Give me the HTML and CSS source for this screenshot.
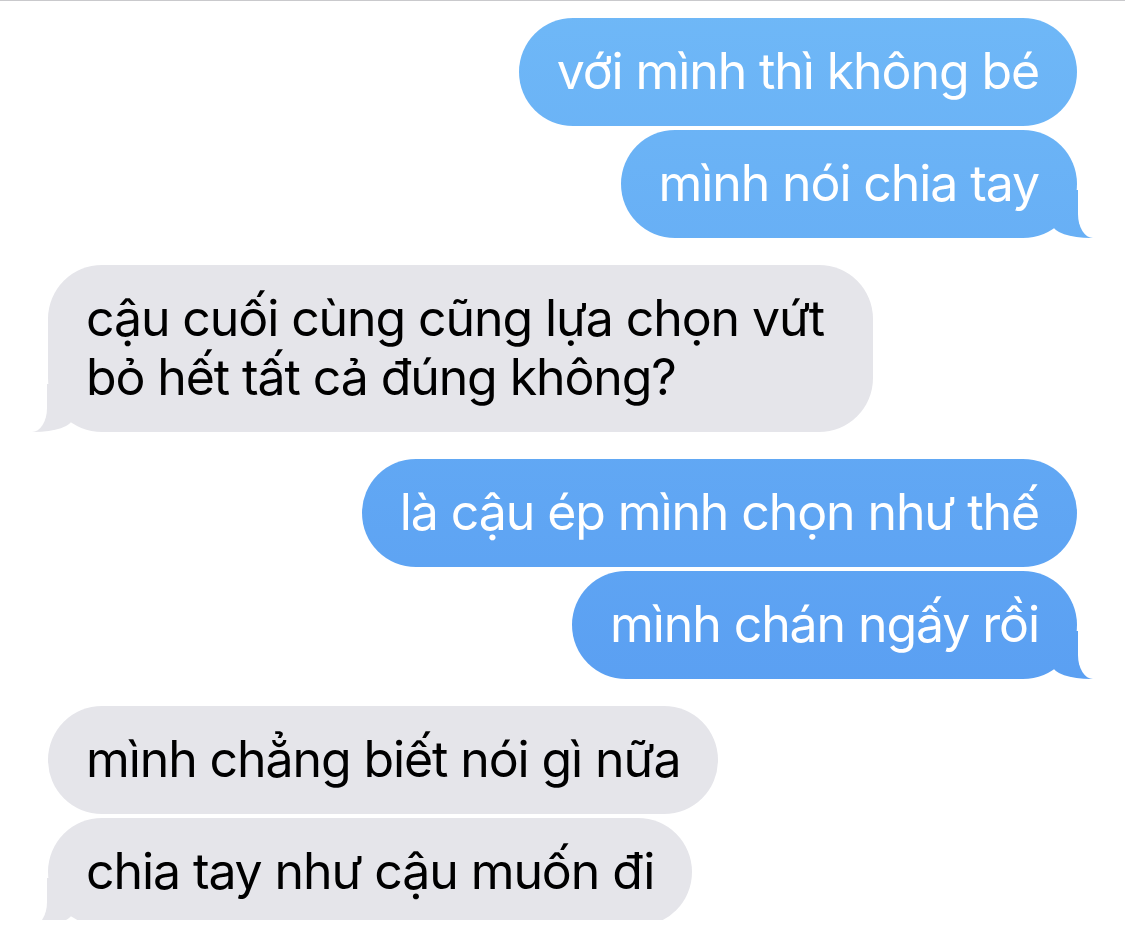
FILE: index.html
```html
<!DOCTYPE html>
<html lang="vi">
  <head>
    <meta charset="UTF-8" />
    <meta name="viewport" content="width=device-width, initial-scale=1.0" />
    <title>Tin nhắn</title>
    <link rel="stylesheet" href="styles.css">
  </head>
  <body>
    <div class="thread">
      <div class="msg sent">với mình thì không bé</div>
      <div class="msg sent tail">mình nói chia tay</div>

      <div class="msg recv tail start multi">cậu cuối cùng cũng lựa chọn vứt<br />bỏ hết tất cả đúng không?</div>

      <div class="msg sent start">là cậu ép mình chọn như thế</div>
      <div class="msg sent tail">mình chán ngấy rồi</div>

      <div class="msg recv start">mình chẳng biết nói gì nữa</div>
      <div class="msg recv tail">chia tay như cậu muốn đi</div>
    </div>
  </body>
</html>
```

FILE: styles.css
```css
body {
  margin: 0;
  background: #fff;
  font-family: Inter, "Noto Sans", "Liberation Sans", sans-serif;
}
.thread {
  height: 920px;
  box-sizing: border-box;
  border-top: 1px solid #c9c9cc;
  padding: 17px 48px 0;
  display: flex;
  flex-direction: column;
  overflow: hidden;
}
.msg {
  position: relative;
  padding: 24px 38px 25px;
  border-radius: 54px;
  font-size: 50px;
  line-height: 59px;
  letter-spacing: -1.1px;
  margin-top: 4px;
}
.msg.start {
  margin-top: 27px;
}
.msg:first-child {
  margin-top: 0;
}
.msg.multi {
  padding-right: 49px;
}
.sent {
  align-self: flex-end;
  color: #fff;
  background: linear-gradient(#6fb8f7 0px, #5a9ff2 700px, #5096f0 938px);
  background-attachment: fixed;
}
.recv {
  align-self: flex-start;
  color: #000;
  background: #e5e5ea;
}

/* bubble tails */
.tail::before,
.tail::after {
  content: "";
  position: absolute;
  bottom: 0;
}
.sent.tail::before {
  right: -16px;
  width: 40px;
  height: 48px;
  background: inherit;
  background-attachment: fixed;
  border-bottom-left-radius: 38px 13px;
}
.sent.tail::after {
  right: -31px;
  width: 30px;
  height: 52px;
  background: #fff;
  border-bottom-left-radius: 15px 24px;
}
.recv.tail::before {
  left: -16px;
  width: 40px;
  height: 48px;
  background: #e5e5ea;
  border-bottom-right-radius: 38px 13px;
}
.recv.tail::after {
  left: -31px;
  width: 30px;
  height: 52px;
  background: #fff;
  border-bottom-right-radius: 15px 24px;
}
```
